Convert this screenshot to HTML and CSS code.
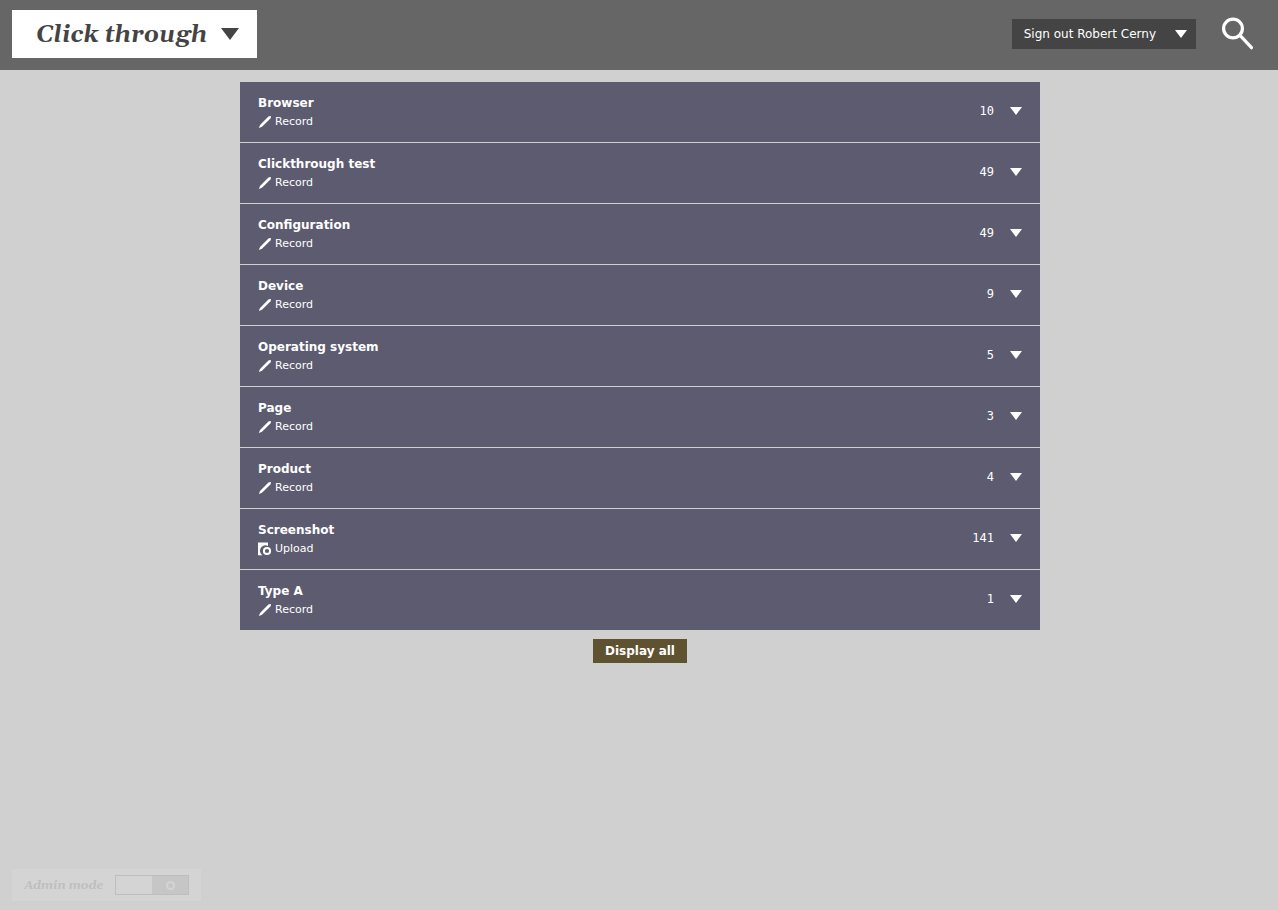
FILE: index.html
```html
<!DOCTYPE html>
<html lang="en">
<head>
<meta charset="utf-8">
<title>Click through</title>
<link rel="stylesheet" href="styles.css">
</head>
<body>
<svg class="sprites" aria-hidden="true">
  <symbol id="pen" viewBox="0 0 14 14"><path d="M0.8 13 L2 9.9 L10.4 1.6 Q11.6 0.7 12.8 1 Q13.2 2.4 12.4 3.4 L4 11.8 Z"/></symbol>
  <symbol id="upload" viewBox="0 0 14 14"><path d="M0 0.5 H10 V4 A4.9 4.9 0 0 0 4.6 13.2 H0 Z"/><circle cx="9" cy="9" r="3.1" fill="none" stroke="currentColor" stroke-width="2"/></symbol>
  <symbol id="down" viewBox="0 0 12 8"><path d="M0 0 H12 L6 8 Z"/></symbol>
</svg>
<header class="topbar">
  <button class="brand" type="button"><span class="brand-text">Click through</span><svg class="brand-arrow"><use href="#down"/></svg></button>
  <div class="tools">
    <button class="account" type="button">Sign out Robert Cerny <svg class="arrow"><use href="#down"/></svg></button>
    <button class="search" type="button" aria-label="Search"><svg class="search-icon" viewBox="0 0 34 34"><circle cx="12" cy="11.5" r="9.4"/><path d="M18.8 18.2 L30.5 30.7"/></svg></button>
  </div>
</header>
<main class="content">
  <ul class="types">
    <li class="type"><div class="info"><h2 class="name">Browser</h2><a class="action" href="#"><svg class="icon"><use href="#pen"/></svg>Record</a></div><span class="count">10</span><button class="expand" type="button" aria-label="Expand Browser"><svg class="arrow"><use href="#down"/></svg></button></li>
    <li class="type"><div class="info"><h2 class="name">Clickthrough test</h2><a class="action" href="#"><svg class="icon"><use href="#pen"/></svg>Record</a></div><span class="count">49</span><button class="expand" type="button" aria-label="Expand Clickthrough test"><svg class="arrow"><use href="#down"/></svg></button></li>
    <li class="type"><div class="info"><h2 class="name">Configuration</h2><a class="action" href="#"><svg class="icon"><use href="#pen"/></svg>Record</a></div><span class="count">49</span><button class="expand" type="button" aria-label="Expand Configuration"><svg class="arrow"><use href="#down"/></svg></button></li>
    <li class="type"><div class="info"><h2 class="name">Device</h2><a class="action" href="#"><svg class="icon"><use href="#pen"/></svg>Record</a></div><span class="count">9</span><button class="expand" type="button" aria-label="Expand Device"><svg class="arrow"><use href="#down"/></svg></button></li>
    <li class="type"><div class="info"><h2 class="name">Operating system</h2><a class="action" href="#"><svg class="icon"><use href="#pen"/></svg>Record</a></div><span class="count">5</span><button class="expand" type="button" aria-label="Expand Operating system"><svg class="arrow"><use href="#down"/></svg></button></li>
    <li class="type"><div class="info"><h2 class="name">Page</h2><a class="action" href="#"><svg class="icon"><use href="#pen"/></svg>Record</a></div><span class="count">3</span><button class="expand" type="button" aria-label="Expand Page"><svg class="arrow"><use href="#down"/></svg></button></li>
    <li class="type"><div class="info"><h2 class="name">Product</h2><a class="action" href="#"><svg class="icon"><use href="#pen"/></svg>Record</a></div><span class="count">4</span><button class="expand" type="button" aria-label="Expand Product"><svg class="arrow"><use href="#down"/></svg></button></li>
    <li class="type"><div class="info"><h2 class="name">Screenshot</h2><a class="action" href="#"><svg class="icon"><use href="#upload"/></svg>Upload</a></div><span class="count">141</span><button class="expand" type="button" aria-label="Expand Screenshot"><svg class="arrow"><use href="#down"/></svg></button></li>
    <li class="type"><div class="info"><h2 class="name">Type A</h2><a class="action" href="#"><svg class="icon"><use href="#pen"/></svg>Record</a></div><span class="count">1</span><button class="expand" type="button" aria-label="Expand Type A"><svg class="arrow"><use href="#down"/></svg></button></li>
  </ul>
  <button class="display-all" type="button">Display all</button>
</main>
<footer class="footer">
  <label class="admin"><span class="admin-text">Admin mode</span><input class="switch-input" type="checkbox" role="switch"><span class="switch"><span class="knob"></span></span></label>
</footer>
</body>
</html>
```
FILE: styles.css
```css
*, *::before { box-sizing: border-box; }

body {
  display: flex;
  flex-direction: column;
  min-height: 100vh;
  margin: 0;
  background: #d0d0d0;
  font: 12px/16px "DejaVu Sans", sans-serif;
}

button {
  margin: 0;
  padding: 0;
  border: 0;
  background: none;
  color: inherit;
  font: inherit;
  cursor: pointer;
}

svg { display: block; fill: currentColor; }

.sprites { position: absolute; width: 0; height: 0; }

.topbar {
  display: flex;
  justify-content: space-between;
  align-items: flex-start;
  padding: 10px 23px 12px 12px;
  background: #666;
  color: #fff;
}

.brand {
  display: flex;
  align-items: center;
  gap: 14px;
  height: 48px;
  padding: 0 18px 0 24px;
  background: #fff;
  color: #444;
  font: italic bold 24px/32px Georgia, Gelasio, "DejaVu Serif", serif;
}

.brand-text, .admin-text { padding-top: 2px; }

.brand-arrow { width: 18px; height: 12px; }

.tools {
  display: flex;
  align-items: center;
  gap: 25px;
  height: 48px;
}

.account {
  display: flex;
  align-items: center;
  gap: 19px;
  height: 30px;
  padding: 0 9px 0 12px;
  background: #444;
}

.arrow { width: 12px; height: 8px; }

.search-icon {
  width: 34px;
  height: 34px;
  fill: none;
  stroke: #fff;
  stroke-width: 3.2;
  stroke-linecap: round;
}

.content {
  display: flex;
  flex: 1;
  flex-direction: column;
  align-items: center;
  gap: 9px;
  padding: 12px 0 12px 2px;
}

.types {
  display: flex;
  flex-direction: column;
  gap: 1px;
  width: 100%;
  max-width: 800px;
  margin: 0;
  padding: 0;
  list-style: none;
}

.type {
  display: flex;
  align-items: flex-start;
  min-height: 60px;
  padding: 13px 18px 0;
  background: #5d5b6f;
  color: #fff;
}

.info { flex: 1; }

.name { margin: 0; font-size: 12px; line-height: 16px; }

.action {
  display: inline-flex;
  align-items: center;
  gap: 3px;
  margin-top: 3px;
  color: #fff;
  font-size: 11px;
  line-height: 16px;
  text-decoration: none;
}

.icon { width: 14px; height: 14px; }

.count {
  margin-top: 8px;
  font-family: "DejaVu Sans Mono", monospace;
}

.expand { margin: 12px 0 0 16px; }

.display-all {
  height: 24px;
  padding: 0 12px;
  background: #5f5230;
  color: #fff;
  font-weight: bold;
}

.footer { padding: 0 12px 9px; }

.admin {
  display: inline-flex;
  align-items: center;
  gap: 12px;
  height: 32px;
  padding: 0 12px;
  background: #d4d4d4;
  color: #bebebe;
  font: italic bold 12px/16px Georgia, Gelasio, "DejaVu Serif", serif;
  vertical-align: top;
}

.switch-input {
  position: absolute;
  opacity: 0;
}

.switch {
  display: flex;
  justify-content: flex-end;
  width: 74px;
  height: 20px;
  border: 1px solid #bebebe;
}

.knob {
  display: flex;
  align-items: center;
  justify-content: center;
  width: 50%;
  background: #c6c6c6;
}

.knob::before {
  width: 9px;
  height: 9px;
  border: 2px solid #d4d4d4;
  border-radius: 50%;
  content: "";
}
```
